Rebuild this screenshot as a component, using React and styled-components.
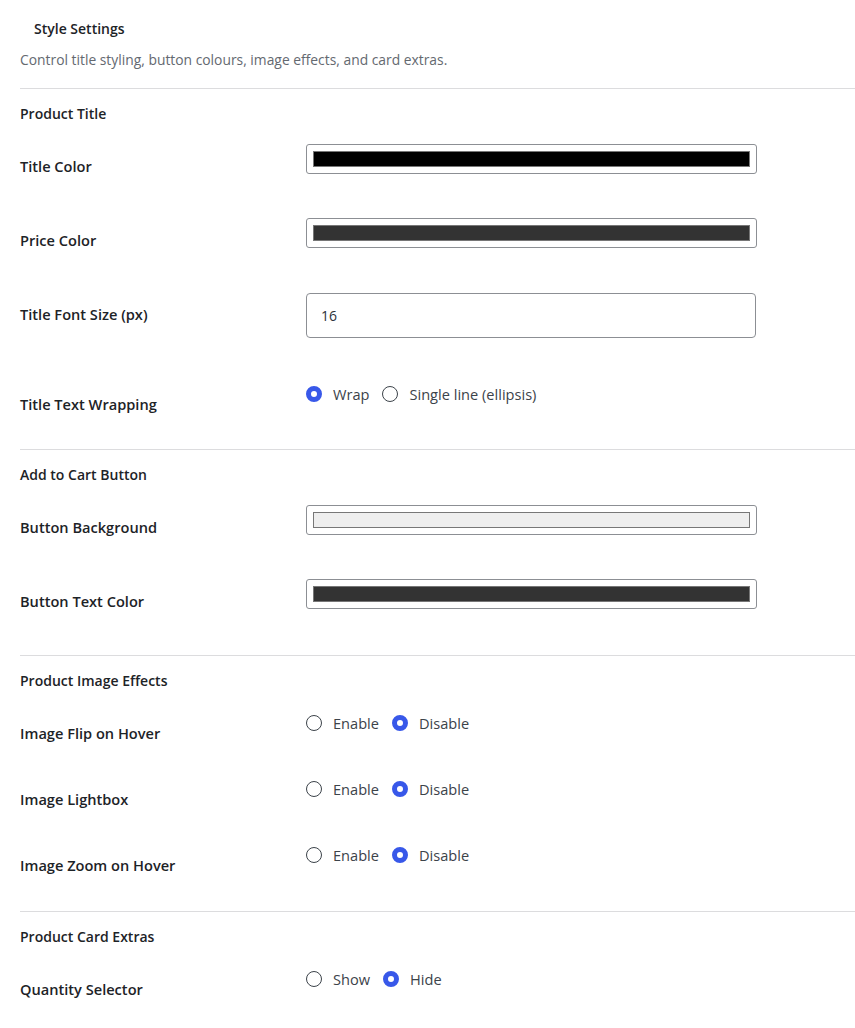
import React from 'react';
import styled, { createGlobalStyle } from 'styled-components';

const GlobalStyle = createGlobalStyle`
  body {
    margin: 0;
    background: #fff;
    font-family: "Segoe UI", "Open Sans", "Noto Sans", sans-serif;
    color: #1d2327;
  }
`;

const Page = styled.div`
  padding: 0 0 0 20px;
`;

const Title = styled.h2`
  margin: 0;
  padding: 19px 0 0 14px;
  font-size: 14px;
  line-height: 20px;
  font-weight: 600;
  color: #1d2327;
`;

const Description = styled.p`
  margin: 12px 0 19px;
  font-size: 13.85px;
  line-height: 18px;
  color: #646970;
`;

const Section = styled.section`
  border-top: 1px solid #dcdcde;
  padding-bottom: ${({ $bottom = 9 }) => $bottom}px;
`;

const SectionHeading = styled.h3`
  margin: 0;
  padding: 16px 0 14px;
  font-size: 14px;
  line-height: 18px;
  font-weight: 600;
  color: #1d2327;
`;

const Row = styled.div`
  display: grid;
  grid-template-columns: 286px 452px;
  align-items: start;
  height: ${({ $height }) => $height}px;
`;

const Label = styled.div`
  padding-top: 20px;
  font-size: 14.6px;
  line-height: 18px;
  font-weight: 600;
  color: #1d2327;
`;

const Control = styled.div`
  padding-top: ${({ $top }) => $top}px;
`;

const ColorField = styled.div`
  box-sizing: border-box;
  width: 451px;
  height: 30px;
  padding: 6px;
  border: 1px solid #8c8f94;
  border-radius: 3px;
  background: #fff;
`;

const Swatch = styled.div`
  box-sizing: border-box;
  height: 16px;
  border: 1px solid #777;
  background: ${({ $color }) => $color};
`;

const TextInput = styled.input`
  box-sizing: border-box;
  width: 450px;
  height: 45px;
  padding: 0 14px;
  border: 1px solid #8c8f94;
  border-radius: 4px;
  font-family: inherit;
  font-size: 14px;
  color: #2c3338;
  background: #fff;
  outline: none;
`;

const RadioGroup = styled.div`
  display: flex;
  align-items: center;
  gap: 13px;
  height: 20px;
`;

const Option = styled.label`
  display: flex;
  align-items: center;
  gap: 11px;
  font-size: 14.6px;
  line-height: 22px;
  height: 20px;
  color: #3c434a;
`;

const Dot = styled.span`
  box-sizing: border-box;
  width: 16px;
  height: 16px;
  border-radius: 50%;
  background: #fff;
  border: ${({ $checked }) => ($checked ? '5px solid #3858e9' : '1px solid #3c434a')};
`;

const Radios = ({ options, value }) => (
  <RadioGroup>
    {options.map((opt) => (
      <Option key={opt}>
        <Dot $checked={opt === value} />
        {opt}
      </Option>
    ))}
  </RadioGroup>
);

const ColorRow = ({ label, color }) => (
  <Row $height={74}>
    <Label>{label}</Label>
    <Control $top={7}>
      <ColorField>
        <Swatch $color={color} />
      </ColorField>
    </Control>
  </Row>
);

const RadioRow = ({ label, options, value }) => (
  <Row $height={66}>
    <Label>{label}</Label>
    <Control $top={9}>
      <Radios options={options} value={value} />
    </Control>
  </Row>
);

const toggle = ['Enable', 'Disable'];

export default function App() {
  return (
    <Page>
      <GlobalStyle />
      <Title>Style Settings</Title>
      <Description>Control title styling, button colours, image effects, and card extras.</Description>

      <Section $bottom={8}>
        <SectionHeading>Product Title</SectionHeading>
        <ColorRow label="Title Color" color="#000000" />
        <ColorRow label="Price Color" color="#333333" />
        <Row $height={90}>
          <Label>Title Font Size (px)</Label>
          <Control $top={8}>
            <TextInput type="text" defaultValue="16" />
          </Control>
        </Row>
        <RadioRow label="Title Text Wrapping" options={['Wrap', 'Single line (ellipsis)']} value="Wrap" />
      </Section>

      <Section>
        <SectionHeading>Add to Cart Button</SectionHeading>
        <ColorRow label="Button Background" color="#eeeeee" />
        <ColorRow label="Button Text Color" color="#333333" />
      </Section>

      <Section>
        <SectionHeading>Product Image Effects</SectionHeading>
        <RadioRow label="Image Flip on Hover" options={toggle} value="Disable" />
        <RadioRow label="Image Lightbox" options={toggle} value="Disable" />
        <RadioRow label="Image Zoom on Hover" options={toggle} value="Disable" />
      </Section>

      <Section>
        <SectionHeading>Product Card Extras</SectionHeading>
        <RadioRow label="Quantity Selector" options={['Show', 'Hide']} value="Hide" />
      </Section>
    </Page>
  );
}
